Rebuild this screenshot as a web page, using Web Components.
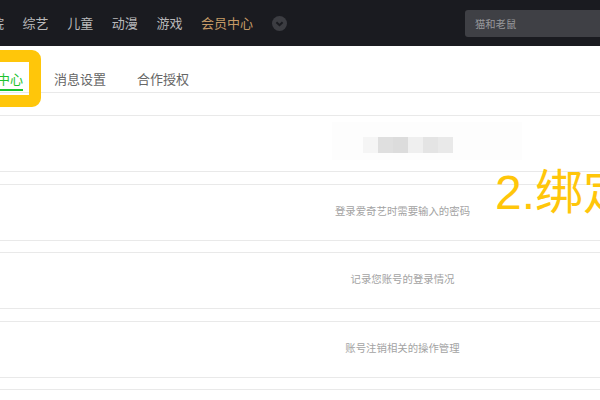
<!DOCTYPE html>
<html>
<head>
<meta charset="utf-8">
<style>
  html, body { margin: 0; height: 400px; overflow: hidden; background: #fff; }
  body { font-family: "Noto Sans CJK SC", "Liberation Sans", sans-serif; position: relative; }
</style>
</head>
<body>
<top-nav>
  <nav-item>院</nav-item>
  <nav-item>综艺</nav-item>
  <nav-item>儿童</nav-item>
  <nav-item>动漫</nav-item>
  <nav-item>游戏</nav-item>
  <nav-item gold>会员中心</nav-item>
</top-nav>
<tab-bar>
  <tab-item active>中心</tab-item>
  <tab-item>消息设置</tab-item>
  <tab-item>合作授权</tab-item>
</tab-bar>
<setting-list>
  <setting-row><blur-mask></blur-mask></setting-row>
  <setting-row>登录爱奇艺时需要输入的密码</setting-row>
  <setting-row>记录您账号的登录情况</setting-row>
  <setting-row>账号注销相关的操作管理</setting-row>
  <setting-row></setting-row>
</setting-list>
<mark-up></mark-up>

<script>
// header bar
var template_nav = document.createElement("template");
template_nav.innerHTML = `
<style>
  :host { display: flex; align-items: center; height: 46px; background: #1a1b20; }
  #items { display: flex; align-items: center; gap: 18.6px; margin-left: -9px; }
  #more { width: 15px; height: 15px; margin-left: 18.5px; flex: none; }
  #search { box-sizing: border-box; margin-left: auto; width: 135px; height: 27px; padding: 0 10px;
    display: flex; align-items: center; background: #3f4045; border-radius: 3px 0 0 3px;
    color: #97989b; font-size: 10.3px; }
</style>
<div id="items"><slot></slot></div>
<svg id="more" viewBox="0 0 15 15">
  <circle cx="7.5" cy="7.5" r="7.5" fill="#3c3d42"/>
  <path d="M4.4 6.2 L7.5 9.2 L10.6 6.2" fill="none" stroke="#1a1b20" stroke-width="2"/>
</svg>
<div id="search">猫和老鼠</div>
`;
class TopNav extends HTMLElement {
  constructor(){
    super();
    this.attachShadow({mode:"open"}).appendChild(template_nav.content.cloneNode(true));
  }
}
customElements.define("top-nav", TopNav);

var template_nav_item = document.createElement("template");
template_nav_item.innerHTML = `
<style>
  :host { display: block; font-size: 13px; line-height: 20px; color: #b9b9bb; white-space: nowrap; }
  :host([gold]) { color: #c59a66; }
</style>
<slot></slot>
`;
class NavItem extends HTMLElement {
  constructor(){
    super();
    this.attachShadow({mode:"open"}).appendChild(template_nav_item.content.cloneNode(true));
  }
}
customElements.define("nav-item", NavItem);

// tabs under the header
var template_tabs = document.createElement("template");
template_tabs.innerHTML = `
<style>
  :host { display: flex; height: 46px; border-bottom: 1px solid #e9e9e9; align-items: flex-end; }
  #inner { display: flex; gap: 31px; margin-left: -3px; }
</style>
<div id="inner"><slot></slot></div>
`;
class TabBar extends HTMLElement {
  constructor(){
    super();
    this.attachShadow({mode:"open"}).appendChild(template_tabs.content.cloneNode(true));
  }
}
customElements.define("tab-bar", TabBar);

var template_tab = document.createElement("template");
template_tab.innerHTML = `
<style>
  :host { display: block; box-sizing: border-box; height: 27px; padding-top: 6px; margin-bottom: 1px; font-size: 13px; line-height: 18px;
    color: #666; white-space: nowrap; border-bottom: 2px solid transparent; }
  :host([active]) { color: #1cc22e; border-bottom-color: #1cc22e; }
</style>
<slot></slot>
`;
class TabItem extends HTMLElement {
  constructor(){
    super();
    this.attachShadow({mode:"open"}).appendChild(template_tab.content.cloneNode(true));
  }
}
customElements.define("tab-item", TabItem);

// rows of settings
var template_list = document.createElement("template");
template_list.innerHTML = `
<style>
  :host { display: flex; flex-direction: column; gap: 11.5px; margin-top: 22px; }
</style>
<slot></slot>
`;
class SettingList extends HTMLElement {
  constructor(){
    super();
    this.attachShadow({mode:"open"}).appendChild(template_list.content.cloneNode(true));
  }
}
customElements.define("setting-list", SettingList);

var template_row = document.createElement("template");
template_row.innerHTML = `
<style>
  :host { display: grid; grid-template-columns: 205px 1fr; box-sizing: border-box; height: 57px;
    border-top: 1px solid #e9e9e9; border-bottom: 1px solid #e9e9e9; }
  #desc { grid-column: 2; display: flex; align-items: center; justify-content: center; padding-bottom: 4px;
    font-size: 10.4px; color: #a3a3a3; white-space: nowrap; }
</style>
<div id="desc"><slot></slot></div>
`;
class SettingRow extends HTMLElement {
  constructor(){
    super();
    this.attachShadow({mode:"open"}).appendChild(template_row.content.cloneNode(true));
  }
}
customElements.define("setting-row", SettingRow);

// blurred out account name
var template_mask = document.createElement("template");
template_mask.innerHTML = `
<style>
  :host { display: block; box-sizing: border-box; width: 190px; height: 38px; padding: 15px 0 0 31px;
    align-self: flex-start; margin: 6px 0 0 49px; background: #fdfdfd; }
  #strip { display: flex; filter: blur(.6px); }
  #strip i { display: block; width: 15px; height: 15.5px; }
</style>
<div id="strip">
  <i style="background:#f5f5f5"></i>
  <i style="background:#dfdfdf"></i>
  <i style="background:#dcdcdc"></i>
  <i style="background:#efefef"></i>
  <i style="background:#e4e4e4"></i>
  <i style="background:#e9e9e9"></i>
</div>
`;
class BlurMask extends HTMLElement {
  constructor(){
    super();
    this.attachShadow({mode:"open"}).appendChild(template_mask.content.cloneNode(true));
  }
}
customElements.define("blur-mask", BlurMask);

// yellow annotations drawn over the page
var template_mark = document.createElement("template");
template_mark.innerHTML = `
<style>
  :host { display: block; position: absolute; inset: 0; pointer-events: none; overflow: hidden; }
  #box { position: absolute; left: -30px; top: 50px; width: 71px; height: 57px; box-sizing: border-box;
    border: 12.5px solid #ffc60a; border-radius: 9px; }
  #note { position: absolute; left: 495px; top: 162px; font-family: "Liberation Sans", "Noto Sans CJK SC", sans-serif;
    font-size: 48px; line-height: 62px; color: #ffc60a; white-space: nowrap; }
</style>
<div id="box"></div>
<div id="note">2.绑定</div>
`;
class MarkUp extends HTMLElement {
  constructor(){
    super();
    this.attachShadow({mode:"open"}).appendChild(template_mark.content.cloneNode(true));
  }
}
customElements.define("mark-up", MarkUp);
</script>
</body>
</html>
